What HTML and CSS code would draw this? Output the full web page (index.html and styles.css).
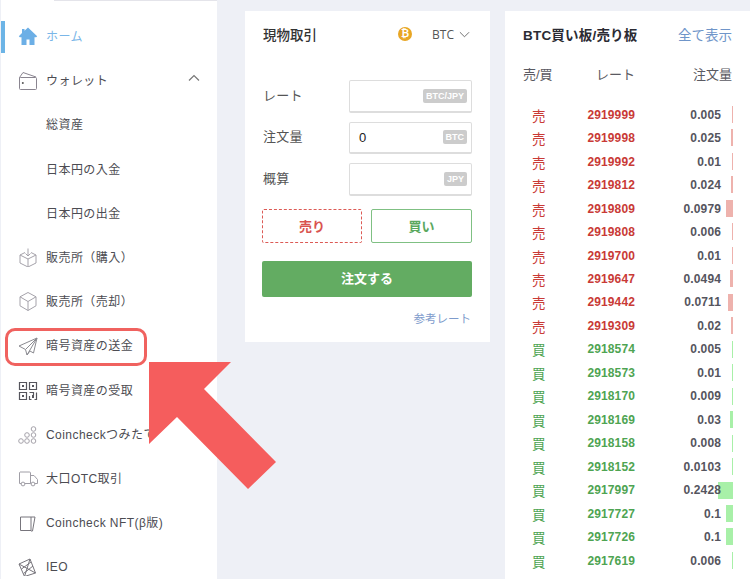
FILE: index.html
```html
<!DOCTYPE html>
<html lang="ja">
<head>
<meta charset="utf-8">
<title>Coincheck</title>
<link rel="stylesheet" href="styles.css">
</head>
<body>
<div class="page">
  <nav class="side">
    <a class="item active"><svg class="ico" viewBox="0 0 20 20"><path d="M10 1.500 6.500 4.700V3H4v4L.8 10.200l1 1h1.700V19h5v-5.500h3V19h5v-7.800h1.700l1-1z" fill="#6cafe6"/></svg><span>ホーム</span></a>
    <a class="item"><svg class="ico" viewBox="0 0 20 20" fill="none" stroke="#8a8590" stroke-width="1"><path d="M2.500 7.500h15a1 1 0 0 1 1 1v10a1 1 0 0 1-1 1h-15a1 1 0 0 1-1-1v-11zM1.500 7.500 5 2.500l13 4.500"/><circle cx="4.800" cy="13" r="1" fill="#555" stroke="none"/></svg><span>ウォレット</span><svg class="chev" viewBox="0 0 12 8" fill="none" stroke="#777" stroke-width="1.200"><path d="M1 6.500 6 1.500l5 5"/></svg></a>
    <a class="item"><span class="sub">総資産</span></a>
    <a class="item"><span class="sub">日本円の入金</span></a>
    <a class="item"><span class="sub">日本円の出金</span></a>
    <a class="item"><svg class="ico" viewBox="0 0 20 20" fill="none" stroke="#a5a2aa" stroke-width="1"><path d="M7 5.500 2 8v8l8 4 8-4V8l-5-2.500M2 8l8 4 8-4M10 12v8M10 1.500v7M7.500 6.500 10 9l2.500-2.500"/></svg><span>販売所（購入）</span></a>
    <a class="item"><svg class="ico" viewBox="0 0 20 20" fill="none" stroke="#a5a2aa" stroke-width="1"><path d="M10 1.500 2 5.800v9l8 4.700 8-4.700v-9zM2 5.800l8 4.700 8-4.700M10 10.500v9"/></svg><span>販売所（売却）</span></a>
    <a class="item"><svg class="ico" viewBox="0 0 20 20" fill="none" stroke="#8a8a90" stroke-width="1"><path d="M19 3 1 11l6.500 3.500L9 20l3-4 3.500 2zM7.500 14.500 19 3 9 20"/></svg><span>暗号資産の送金</span></a>
    <a class="item"><svg class="ico" viewBox="0 0 20 20" fill="none" stroke="#55555c" stroke-width="1.200"><path d="M1.500 2.500h7v7h-7zM11.500 2.500h7v7h-7zM1.500 12.500h7v7h-7zM11.500 12.500h4v3M18.500 12.500v7h-2M11.500 16v3.500h2"/><path d="M4 5h2v2H4zM14 5h2v2h-2zM4 15h2v2H4zM14 15h2v3h-2z" fill="#55555c" stroke="none"/></svg><span>暗号資産の受取</span></a>
    <a class="item"><svg class="ico" viewBox="0 0 20 20" fill="none" stroke="#a5a2aa" stroke-width="1"><circle cx="3" cy="17" r="2.300"/><circle cx="9" cy="17" r="2.300"/><circle cx="15.500" cy="17" r="2.300"/><circle cx="9" cy="11" r="2.300"/><circle cx="15.500" cy="11" r="2.300"/><circle cx="15.500" cy="5" r="2.300"/></svg><span class="clip">Coincheckつみたて</span></a>
    <a class="item"><svg class="ico" viewBox="0 0 20 20" fill="none" stroke="#a09ea6" stroke-width="1"><path d="M2 4h9.500a1 1 0 0 1 1 1v10.500H1.500V4.500zM12.500 7.500H16l3.500 4v4h-7"/><circle cx="5" cy="16" r="1.900" fill="#fff"/><circle cx="15" cy="16" r="1.900" fill="#fff"/></svg><span>大口OTC取引</span></a>
    <a class="item"><svg class="ico" viewBox="0 0 20 20" fill="none" stroke="#77757c" stroke-width="1"><path d="M2.500 5h10.500v13.500H2.500zM13 5h4l-2.500 14H13"/></svg><span>Coincheck NFT(β版)</span></a>
    <a class="item"><svg class="ico" viewBox="0 0 20 20" fill="none" stroke="#77757c" stroke-width="1"><path d="M1 8 12 3l5.500 14-11 3.500zM1 8l16.500 9M12 3 6.500 20.500M3.500 13 13 6M5.500 17.500 15 10"/></svg><span>IEO</span></a>
  </nav>

  <section class="trade">
    <header class="trade-head">
      <h2>現物取引</h2>
      <span class="coin">₿</span>
      <span class="pair">BTC</span>
      <svg class="down" viewBox="0 0 12 7" fill="none" stroke="#666" stroke-width="1"><path d="M1 1l5 5 5-5"/></svg>
    </header>
    <div class="fields">
      <div class="field"><label>レート</label><div class="box"><b class="unit">BTC/JPY</b></div></div>
      <div class="field"><label>注文量</label><div class="box"><span class="val">0</span><b class="unit">BTC</b></div></div>
      <div class="field"><label>概算</label><div class="box"><b class="unit">JPY</b></div></div>
    </div>
    <div class="sides">
      <button class="btn sell">売り</button>
      <button class="btn buy">買い</button>
    </div>
    <button class="submit">注文する</button>
    <a class="ref">参考レート</a>
  </section>

  <section class="book">
    <header class="book-head"><h2>BTC買い板/売り板</h2><a>全て表示</a></header>
    <div class="cols"><span>売/買</span><span>レート</span><span>注文量</span></div>
    <div class="rows">
      <div class="row s"><i>売</i><em>2919999</em><b>0.005</b><u style="width:1px"></u></div>
      <div class="row s"><i>売</i><em>2919998</em><b>0.025</b><u style="width:2px"></u></div>
      <div class="row s"><i>売</i><em>2919992</em><b>0.01</b><u style="width:1px"></u></div>
      <div class="row s"><i>売</i><em>2919812</em><b>0.024</b><u style="width:2px"></u></div>
      <div class="row s"><i>売</i><em>2919809</em><b>0.0979</b><u style="width:7px"></u></div>
      <div class="row s"><i>売</i><em>2919808</em><b>0.006</b><u style="width:1px"></u></div>
      <div class="row s"><i>売</i><em>2919700</em><b>0.01</b><u style="width:1px"></u></div>
      <div class="row s"><i>売</i><em>2919647</em><b>0.0494</b><u style="width:3px"></u></div>
      <div class="row s"><i>売</i><em>2919442</em><b>0.0711</b><u style="width:5px"></u></div>
      <div class="row s"><i>売</i><em>2919309</em><b>0.02</b><u style="width:2px"></u></div>
      <div class="row g"><i>買</i><em>2918574</em><b>0.005</b><u style="width:1px"></u></div>
      <div class="row g"><i>買</i><em>2918573</em><b>0.01</b><u style="width:1px"></u></div>
      <div class="row g"><i>買</i><em>2918170</em><b>0.009</b><u style="width:1px"></u></div>
      <div class="row g"><i>買</i><em>2918169</em><b>0.03</b><u style="width:3px"></u></div>
      <div class="row g"><i>買</i><em>2918158</em><b>0.008</b><u style="width:1px"></u></div>
      <div class="row g"><i>買</i><em>2918152</em><b>0.0103</b><u style="width:1px"></u></div>
      <div class="row g"><i>買</i><em>2917997</em><b>0.2428</b><u style="width:15px"></u></div>
      <div class="row g"><i>買</i><em>2917727</em><b>0.1</b><u style="width:7px"></u></div>
      <div class="row g"><i>買</i><em>2917726</em><b>0.1</b><u style="width:7px"></u></div>
      <div class="row g"><i>買</i><em>2917619</em><b>0.006</b><u style="width:1px"></u></div>
    </div>
  </section>
</div>

<div class="callout"></div>
<svg class="arrow" viewBox="0 0 750 579"><polygon points="149,362 231,362 204,389 276,462 248,489 177,417 149,444" fill="#f55d5d"/></svg>
</body>
</html>
```
FILE: styles.css
```css
* { box-sizing: border-box; }
html, body { margin: 0; height: 100%; overflow: hidden; }
body {
  background: #eef0f6;
  font-family: "Liberation Sans", "Noto Sans CJK JP", sans-serif;
  color: #444;
}
.page { display: flex; width: 750px; height: 579px; overflow: hidden; align-items: flex-start; }

.side {
  width: 216px;
  margin-left: 1px;
  height: 579px;
  flex: none;
  background: #fff;
  padding-top: 14px;
  display: flex;
  flex-direction: column;
  position: relative;
}
.side::before {
  content: "";
  position: absolute;
  left: 53px; right: 0; top: 0;
  height: 1px;
  background: #e4e4ea;
}
.item {
  display: flex;
  align-items: center;
  height: 44.2px;
  flex: none;
  padding-left: 17px;
  font-size: 12px;
  line-height: 16px;
  color: #4c4c52;
  position: relative;
  letter-spacing: .45px;
  white-space: nowrap;
}
.item span { padding-top: 2px; }
.item.active { color: #7ab6e8; }
.item.active::before {
  content: "";
  position: absolute;
  left: 0; top: 7px;
  width: 4px; height: 32px;
  background: #6cb4e6;
}
.ico { width: 20px; height: 20px; margin-right: 8px; flex: none; }
.sub { margin-left: 28px; }
.chev { width: 12px; height: 8px; margin-left: auto; margin-right: 17px; margin-top: -4px; }
.clip { display: block; }

.trade {
  width: 245px;
  height: 331px;
  margin: 11px 0 0 28px;
  background: #fff;
  padding: 0 18px 0 17px;
  flex: none;
  display: flex;
  flex-direction: column;
}
.trade-head { display: flex; align-items: center; height: 46px; margin-bottom: 23px; }
.trade-head h2 { font-size: 13.500px; font-weight: 500; color: #333; margin: 0 0 0 1px; flex: 1; }
.coin {
  width: 14px; height: 14px; border-radius: 50%;
  background: #e8a624; color: #fff;
  font-size: 10px; font-weight: 700; line-height: 14px; text-align: center;
  margin-right: 20px;
}
.pair { font-size: 12px; color: #555; margin-right: 5px; font-family: "Open Sans", sans-serif; }
.down { width: 11px; height: 7px; margin-right: 2px; }

.fields { display: flex; flex-direction: column; gap: 9px; }
.field { display: flex; align-items: center; justify-content: space-between; height: 32.500px; }
.field label { font-size: 13px; line-height: 16px; color: #555; padding: 0 0 1px 1px; letter-spacing: .3px; }
.box {
  width: 123px; height: 32.500px;
  border: 1px solid #ddd;
  border-bottom-width: 2px;
  border-radius: 2px;
  display: flex; align-items: center;
  padding: 0 4px 0 9px;
}
.val { font-size: 13px; color: #222; }
.unit {
  margin-left: auto;
  background: #ccc; color: #fff;
  font-size: 9px; font-weight: 700;
  padding: 1px 3px; border-radius: 2px;
  line-height: 12px;
}

.sides { display: flex; justify-content: space-between; margin-top: 13.500px; }
.btn {
  height: 34px; background: #fff; border-radius: 2px; padding: 0 0 2px;
  font: 700 13px "Liberation Sans", "Noto Sans CJK JP", sans-serif;
}
.sell { width: 100px; border: 1px dashed #dc5a55; color: #d9534f; }
.buy { width: 101px; border: 1px solid #7fc083; color: #5aa85e; }
.submit {
  margin-top: 18px; height: 36px; width: 210px; padding: 0 0 3px;
  background: #63ac62; color: #fff;
  border: 0; border-radius: 2px;
  font: 700 13px "Liberation Sans", "Noto Sans CJK JP", sans-serif;
}
.ref { align-self: flex-end; margin: 13px 1px 0 0; font-size: 11.500px; color: #7e9bcc; }

.book {
  width: 245px; height: 568px;
  margin: 11px 0 0 15px;
  background: #fff;
  flex: none;
  padding: 0 18px;
}
.book-head { display: flex; justify-content: space-between; align-items: center; height: 46px; }
.book-head h2 { margin: 0; font-size: 13.500px; font-weight: 700; color: #2b2b33; letter-spacing: .2px; }
.book-head a { font-size: 13.500px; color: #6f95c9; }
.cols {
  display: grid;
  grid-template-columns: 52px 60px 1fr;
  font-size: 13px; color: #5a5a62;
  height: 35px; align-items: center;
  padding-bottom: 2px;
}
.cols span:nth-child(2), .cols span:nth-child(3) { text-align: right; }
.rows { padding-top: 11px; width: 210px; position: relative; }
.row {
  display: grid;
  grid-template-columns: 52px 60px 1fr;
  height: 23.470px;
  align-items: center;
  font-size: 12px;
  position: relative;
  padding-right: 12px;
  letter-spacing: .12px;
}
.row i { font-style: normal; padding-left: 9px; font-size: 13.500px; }
.row em { font-style: normal; font-weight: 700; text-align: right; }
.row b { text-align: right; color: #55555e; font-weight: 700; position: relative; z-index: 1; }
.row u {
  position: absolute; right: 0; top: 3px; height: 17px; display: block;
}
.s i, .s em { color: #c93a36; }
.g i, .g em { color: #4ea452; }
.s u { background: #eeb2ad; }
.g u { background: #a8f0a8; }

.callout {
  position: absolute; left: 5px; top: 328px;
  width: 142px; height: 38px;
  border: 3px solid #f0625f; border-radius: 10px;
}
.arrow { position: absolute; left: 0; top: 0; width: 750px; height: 579px; pointer-events: none; }
```
